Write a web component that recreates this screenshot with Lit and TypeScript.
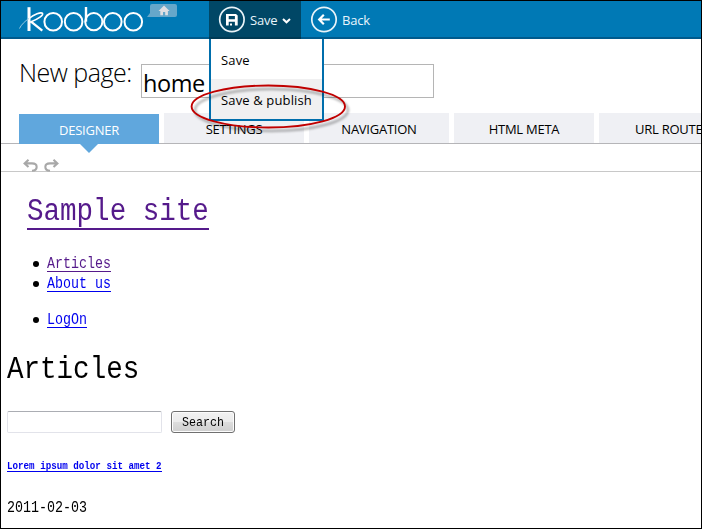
import { LitElement, html, css, svg } from "lit";
import { customElement, property } from "lit/decorators.js";
import { classMap } from "lit/directives/class-map.js";

/** Tall, narrow typewriter text used by the previewed site. */
@customElement("type-text")
class TypeText extends LitElement {
  static styles = css`
    :host { display: inline-block; font-family: "Liberation Mono", monospace; white-space: pre; }
    .t { display: inline-block; transform: scaleY(1.17); transform-origin: 0 75%; }
  `;
  render() {
    return html`<span class="t"><slot></slot></span>`;
  }
}

@customElement("top-bar")
class TopBar extends LitElement {
  static styles = css`
    :host { display: flex; height: 38px; box-sizing: border-box; background: #0079b5;
      border-bottom: 2px solid #005a8c; font: 13px/38px "Open Sans", "Noto Sans", sans-serif; color: #e8f5fc; flex: none; }
    .brand { width: 208px; flex: none; }
    .brand svg { display: block; }
    .btn { display: flex; align-items: center; height: 38px; box-sizing: border-box; }
    .save { position: relative; width: 92px; background: #004766; padding-left: 9px; border-bottom: 2px solid #003a54; }
    .back { padding-left: 9px; height: 36px; }
    .btn svg { flex: none; }
    .label { margin-left: 5px; padding-top: 2px; line-height: 34px; white-space: nowrap; }
    .save .label { letter-spacing: -0.2px; }
    .back .label { margin-left: 4px; letter-spacing: -0.2px; }
    .chev { margin-left: 5px; margin-top: 4px; }
    .menu { position: absolute; left: 0; top: 38px; width: 115px; box-sizing: border-box; z-index: 2;
      border: solid #006eac; border-width: 0 2px 2px; background: #fff; color: #000; }
    .item { height: 40px; line-height: 42px; padding-left: 10px; white-space: nowrap; letter-spacing: 0.14px; }
    .item.hot { background: #f0f0f1; }
    .ring { position: absolute; left: -24px; top: 80px; z-index: 3; }
  `;
  render() {
    return html`
      <div class="brand">
        <svg width="208" height="36" viewBox="1 1 208 36" fill="none" stroke="#fff" stroke-width="2">
          <path d="M29 7.2V31" stroke-width="3" />
          <path d="M31 21.6L42.3 30.6" stroke-width="2.3" />
          <path d="M30 22.3C39 19 43.5 15 42.5 13.4C41 11.8 34 14.5 29 18.5" stroke-width="1.6" />
          <path d="M29 18.5C25 21 21 25 19.5 28.5" stroke-width="1" stroke="#9bcbe2" />
          <circle cx="53.2" cy="21.7" r="8.8" /><circle cx="73.6" cy="21.7" r="8.8" />
          <path d="M86 7V21.7" stroke-width="2.4" />
          <circle cx="93.8" cy="21.7" r="8.6" /><circle cx="112.8" cy="21.7" r="8.8" /><circle cx="133.3" cy="21.7" r="8.8" />
          <path d="M152 4H175Q177 4 177 6V15Q177 17 175 17H147L150 13V6Q150 4 152 4Z" fill="#66a7ca" stroke="none" />
          <path d="M164 5.5L158.5 11H160.3V15.3H163V12H165.2V15.3H167.9V11H169.6Z" fill="#e0dfe2" stroke="none" />
        </svg>
      </div>
      <div class="btn save">
        <svg width="27" height="27" viewBox="0 0 27 27">
          <circle cx="13.9" cy="13.5" r="12.2" fill="none" stroke="#e8f3f8" stroke-width="1.7" />
          <path fill="#fff" fill-rule="evenodd" d="M8 8H18L19.7 9.5V19.5H8ZM10.7 10V13.3H16.9V10ZM10.7 15.8V19.5H12V17.6H14V19.5H16.9V15.8Z" />
        </svg>
        <span class="label">Save</span>
        <svg class="chev" width="9" height="6" viewBox="0 0 9 6"><path d="M1 1L4.5 4.3L8 1" fill="none" stroke="#fff" stroke-width="2" /></svg>
        <div class="menu">
          <div class="item">Save</div>
          <div class="item hot">Save &amp; publish</div>
        </div>
        <svg class="ring" width="168" height="56" viewBox="185 81 168 56">
          <defs><filter id="soft" x="-10%" y="-20%" width="120%" height="140%"><feGaussianBlur stdDeviation="1.3" /></filter></defs>
          <ellipse cx="271.5" cy="110" rx="76.5" ry="21" fill="none" stroke="#000" stroke-opacity=".28" stroke-width="2.6" filter="url(#soft)" />
          <ellipse cx="268.3" cy="106.5" rx="76.7" ry="21" fill="none" stroke="#c00000" stroke-width="1.9" />
        </svg>
      </div>
      <div class="btn back">
        <svg width="28" height="27" viewBox="0 0 28 27">
          <circle cx="14" cy="13.5" r="12.2" fill="none" stroke="#e8f3f8" stroke-width="1.7" />
          <path d="M19.8 13.5H9.3M13.8 8.8L9.2 13.5L13.8 18.2" fill="none" stroke="#fff" stroke-width="2.2" />
        </svg>
        <span class="label">Back</span>
      </div>
    `;
  }
}

@customElement("tab-strip")
class TabStrip extends LitElement {
  @property({ attribute: false }) tabs = ["DESIGNER", "SETTINGS", "NAVIGATION", "HTML META", "URL ROUTE"];
  static styles = css`
    :host { display: flex; gap: 5px; height: 31px; box-sizing: border-box; padding-left: 18px; overflow: visible;
      border-bottom: 1px solid #b5b5b8; font: 13px/33px "Open Sans", "Noto Sans", sans-serif; }
    .tab { width: 140px; height: 30px; flex: none; box-sizing: border-box; background: #eff0f4; color: #000;
      text-align: center; letter-spacing: -0.25px; }
    .tab.last { text-align: left; text-indent: 36px; }
    .tab.on { position: relative; height: 30px; margin-top: 1px; background: #60a7dd; color: #fff; }
    .tab.on::after { content: ""; position: absolute; left: 61px; top: 30px; border: solid transparent;
      border-width: 9px 9.5px 0; border-top-color: #60a7dd; }
  `;
  render() {
    return this.tabs.map(
      (t, i) => html`<div class=${classMap({ tab: true, on: i === 0, last: i === this.tabs.length - 1 })}>${t}</div>`
    );
  }
}

const undoShape = svg`<path d="M5.5 0.8L1.6 4.4L5.5 8M2 4.4H9C15.2 4.4 15.2 11.2 9 11.8" fill="none" stroke="#a8a8a8" stroke-width="2.1"/>`;

@customElement("app-root")
class AppRoot extends LitElement {
  static styles = css`
    :host { display: flex; flex-direction: column; width: 702px; height: 529px; box-sizing: border-box;
      border: 1px solid #000; background: #fff; overflow: hidden; color: #000; }
    .title { display: flex; height: 74px; flex: none; padding-left: 18px; box-sizing: border-box;
      font-family: "Open Sans", "Noto Sans", sans-serif; }
    .caption { width: 122px; padding-top: 15px; font-size: 25px; line-height: 36px; font-weight: 300; white-space: nowrap; letter-spacing: -0.5px; }
    .name { width: 293px; height: 34px; margin-top: 25px; box-sizing: border-box; border: 1px solid #b5b5b5;
      font-size: 23.5px; line-height: 36px; padding-left: 1px; letter-spacing: -0.4px; }
    .tools { display: flex; gap: 6px; height: 28px; flex: none; box-sizing: border-box; padding: 15px 0 0 22px;
      border-bottom: 1px solid #c8c8c8; }
    .tools svg { flex: none; }
    .redo { transform: scaleX(-1); }
    .site { padding-left: 6px; display: flex; flex-direction: column; align-items: flex-start; }
    .h1 { font-size: 27.55px; line-height: 40px; }
    .head { margin: 22px 0 0 20px; border-bottom: 2px solid #551a8b; color: #551a8b; height: 34px; }
    .list { display: flex; flex-direction: column; margin: 25px 0 0 25px; }
    .row { display: flex; align-items: center; height: 20px; gap: 8px; }
    .row.gap { margin-top: 16px; }
    .row::before { content: ""; width: 6px; height: 6px; margin: -3px 0 0 1px; border-radius: 50%; background: #000; }
    .link { color: #0000ee; border-bottom: 1px solid; font-size: 13.333px; line-height: 17px; height: 15px; margin-top: -2px; }
    .seen { color: #551a8b; }
    .big { margin-top: 21px; height: 36px; }
    .search { display: flex; gap: 9px; margin-top: 23px; height: 22px; }
    .field { width: 155px; box-sizing: border-box; border: 1px solid #e2e3ea; border-top-color: #abadb3; border-radius: 2px; }
    .go { width: 64px; box-sizing: border-box; border: 1px solid #707070; border-radius: 3px; text-align: center;
      font-size: 11.67px; line-height: 21px; background: linear-gradient(#f2f2f2, #ebebeb 50%, #dddddd 50%, #cfcfcf);
      box-shadow: inset 0 0 0 1px #fcfcfc; }
    .post { margin-top: 27px; height: 11px; border-bottom: 1px solid; color: #0000ee; font-size: 9.21px; font-weight: bold; line-height: 13px; }
    .date { margin-top: 29px; font-size: 13.333px; line-height: 16px; }
  `;
  render() {
    return html`
      <top-bar></top-bar>
      <div class="title">
        <div class="caption">New page:</div>
        <div class="name">home</div>
      </div>
      <tab-strip></tab-strip>
      <div class="tools">
        <svg width="15" height="13" viewBox="0 0 15 13">${undoShape}</svg>
        <svg class="redo" width="15" height="13" viewBox="0 0 15 13">${undoShape}</svg>
      </div>
      <div class="site">
        <type-text class="h1 head">Sample site</type-text>
        <div class="list">
          <div class="row"><type-text class="link seen">Articles</type-text></div>
          <div class="row"><type-text class="link">About us</type-text></div>
          <div class="row gap"><type-text class="link">LogOn</type-text></div>
        </div>
        <type-text class="h1 big">Articles</type-text>
        <div class="search">
          <div class="field"></div>
          <div class="go"><type-text>Search</type-text></div>
        </div>
        <type-text class="post">Lorem ipsum dolor sit amet 2</type-text>
        <type-text class="date">2011-02-03</type-text>
      </div>
    `;
  }
}
